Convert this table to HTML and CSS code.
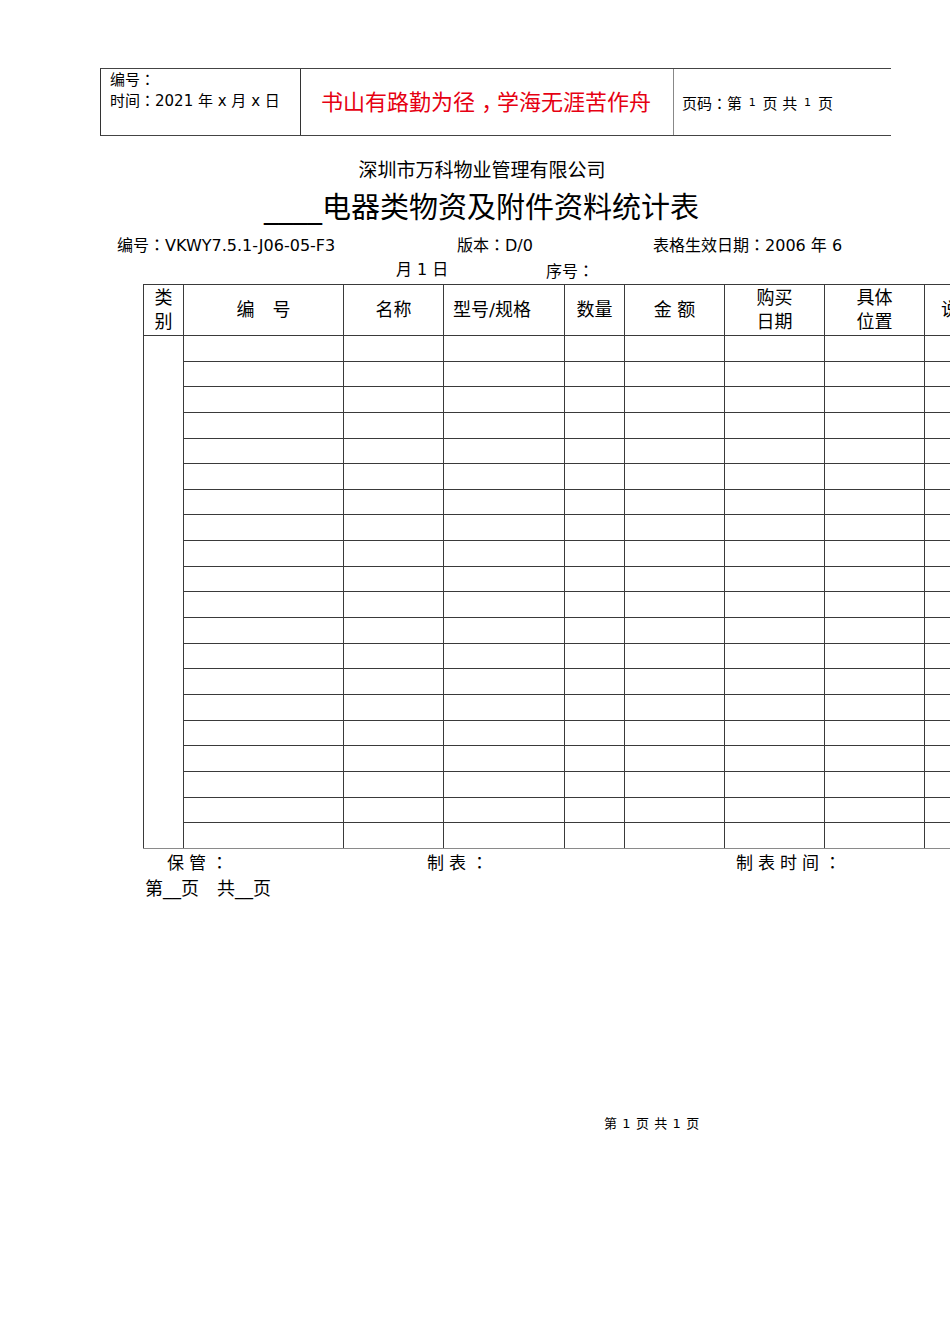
FILE: index.html
```html
<!DOCTYPE html>
<html lang="zh">
<head>
<meta charset="utf-8">
<title>电器类物资及附件资料统计表</title>
<link rel="stylesheet" href="styles.css">
</head>
<body>
<div class="page">
  <div class="docbar">
    <div class="doc-meta">
      <div>编号<span class="colon">：</span></div>
      <div>时间<span class="colon">：</span>2021 年 x 月 x 日</div>
    </div>
    <div class="doc-motto">书山有路勤为径<span class="comma">，</span>学海无涯苦作舟</div>
    <div class="doc-page">页码<span class="colon">：</span>第 <span class="small">1</span> 页 共 <span class="small">1</span> 页</div>
  </div>

  <div class="company">深圳市万科物业管理有限公司</div>
  <div class="title">____电器类物资及附件资料统计表</div>

  <div class="meta meta-1">
    <span class="m-code">编号<span class="colon">：</span>VKWY7.5.1-J06-05-F3</span>
    <span class="m-ver">版本<span class="colon">：</span>D/0</span>
    <span>表格生效日期<span class="colon">：</span>2006 年 6</span>
  </div>
  <div class="meta meta-2">
    <span class="m-day">月 1 日</span>
    <span>序号<span class="colon">：</span></span>
  </div>

  <div class="table-wrap">
    <table class="grid">
      <colgroup>
        <col class="c1"><col class="c2"><col class="c3"><col class="c4"><col class="c5">
        <col class="c6"><col class="c7"><col class="c8"><col class="c9">
      </colgroup>
      <thead>
        <tr>
          <th>类<br>别</th>
          <th>编　号</th>
          <th class="gray-l">名称</th>
          <th class="gray-l spec">型号/规格</th>
          <th>数量</th>
          <th>金 额</th>
          <th>购买<br>日期</th>
          <th>具体<br>位置</th>
          <th class="gray-l">说明</th>
        </tr>
      </thead>
      <tbody id="rows"></tbody>
    </table>
  </div>

  <div class="sign">
    <span class="s-keep">保管<span class="colon">：</span></span>
    <span class="s-make">制表<span class="colon">：</span></span>
    <span>制表时间<span class="colon">：</span></span>
  </div>
  <div class="pages">第__页　共__页</div>

  <div class="foot">第 1 页 共 1 页</div>
</div>
<script>
  (function () {
    var tb = document.getElementById('rows');
    var html = '';
    for (var i = 0; i < 20; i++) {
      html += '<tr>';
      if (i === 0) html += '<td rowspan="20"></td>';
      html += '<td></td><td class="gray-l"></td><td class="gray-l"></td><td></td><td></td><td></td><td></td><td class="gray-l"></td></tr>';
    }
    tb.innerHTML = html;
  })();
</script>
</body>
</html>
```

FILE: styles.css
```css
html, body {
  margin: 0;
  padding: 0;
  background: #fff;
}
body {
  width: 950px;
  height: 1344px;
  overflow: hidden;
  font-family: "DejaVu Sans", "Noto Sans CJK SC", sans-serif;
  color: #000;
}
.page {
  padding-top: 68px;
}
.colon {
  display: inline-block;
  width: 1em;
  text-align: center;
  font-family: "Noto Sans CJK TC", "Noto Sans CJK JP", sans-serif;
  text-spacing-trim: space-all;
}
.comma {
  display: inline-block;
  width: 1em;
  box-sizing: border-box;
  padding-left: 0.28em;
  text-align: left;
  white-space: nowrap;
  font-feature-settings: "halt";
}

/* header strip */
.docbar {
  margin-left: 100px;
  width: 790px;
  height: 66px;
  border-top: 1px solid #444;
  border-bottom: 1px solid #444;
  border-left: 1px solid #333;
  display: grid;
  grid-template-columns: 200px 373px 1fr;
}
.doc-meta {
  font-size: 15px;
  line-height: 20px;
  padding: 0 0 0 9px;
  border-right: 1px solid #333;
}
.doc-motto {
  color: #e60012;
  font-size: 22px;
  line-height: 30px;
  display: flex;
  align-items: center;
  justify-content: center;
  padding-right: 2px;
  padding-top: 1px;
  border-right: 1px solid #888;
}
.doc-page {
  font-size: 15px;
  display: flex;
  align-items: center;
  padding-left: 8px;
  white-space: pre;
}
.small {
  font-size: 11px;
  margin: 0 2px;
}

.company {
  margin-top: 22px;
  font-size: 19px;
  line-height: 24px;
  text-align: center;
  padding-left: 14px;
}
.title {
  margin-top: 8px;
  font-size: 29px;
  line-height: 37px;
  text-align: center;
  padding-left: 13px;
}

.meta {
  font-size: 16px;
  line-height: 25px;
  display: flex;
  white-space: nowrap;
}
.meta-1 {
  margin-top: 5px;
  padding-left: 117px;
}
.m-code { width: 340px; }
.m-ver { width: 196px; }
.meta-2 {
  padding-left: 396px;
  line-height: 24px;
}
.m-day { width: 150px; }

/* table */
.table-wrap {
  margin-left: 143px;
  width: 900px;
}
.grid {
  border-collapse: collapse;
  table-layout: fixed;
  width: 900px;
}
.c1 { width: 40px; }
.c2 { width: 160px; }
.c3 { width: 100px; }
.c4 { width: 121px; }
.c5 { width: 60px; }
.c6 { width: 100px; }
.c7 { width: 100px; }
.c8 { width: 100px; }
.c9 { width: 119px; }

.grid th, .grid td {
  border: 1px solid #3a3a3a;
  padding: 0;
}
.grid th {
  height: 50px;
  font-weight: normal;
  font-size: 18px;
  line-height: 24px;
  text-align: center;
  vertical-align: middle;
}
.grid th.spec {
  text-align: left;
  padding-left: 9px;
}
.grid th:last-child {
  text-align: left;
  padding-left: 16px;
}
.grid td {
  height: 24.65px;
}
.grid .gray-l {
  border-left-color: #8a8a8a;
}
.grid tbody tr:last-child td,
.grid tbody td[rowspan] {
  border-bottom-color: #8a8a8a;
}

/* signatures */
.sign {
  font-size: 17px;
  line-height: 25px;
  letter-spacing: 5px;
  display: flex;
  padding-left: 167px;
  white-space: nowrap;
}
.sign .colon {
  letter-spacing: 0;
}
.s-keep { width: 260px; }
.s-make { width: 309px; }
.pages {
  font-size: 18px;
  line-height: 25px;
  padding-left: 145px;
}

.foot {
  margin-top: 214px;
  padding-left: 604px;
  font-size: 13px;
  letter-spacing: 0.6px;
  line-height: 18px;
}
```
